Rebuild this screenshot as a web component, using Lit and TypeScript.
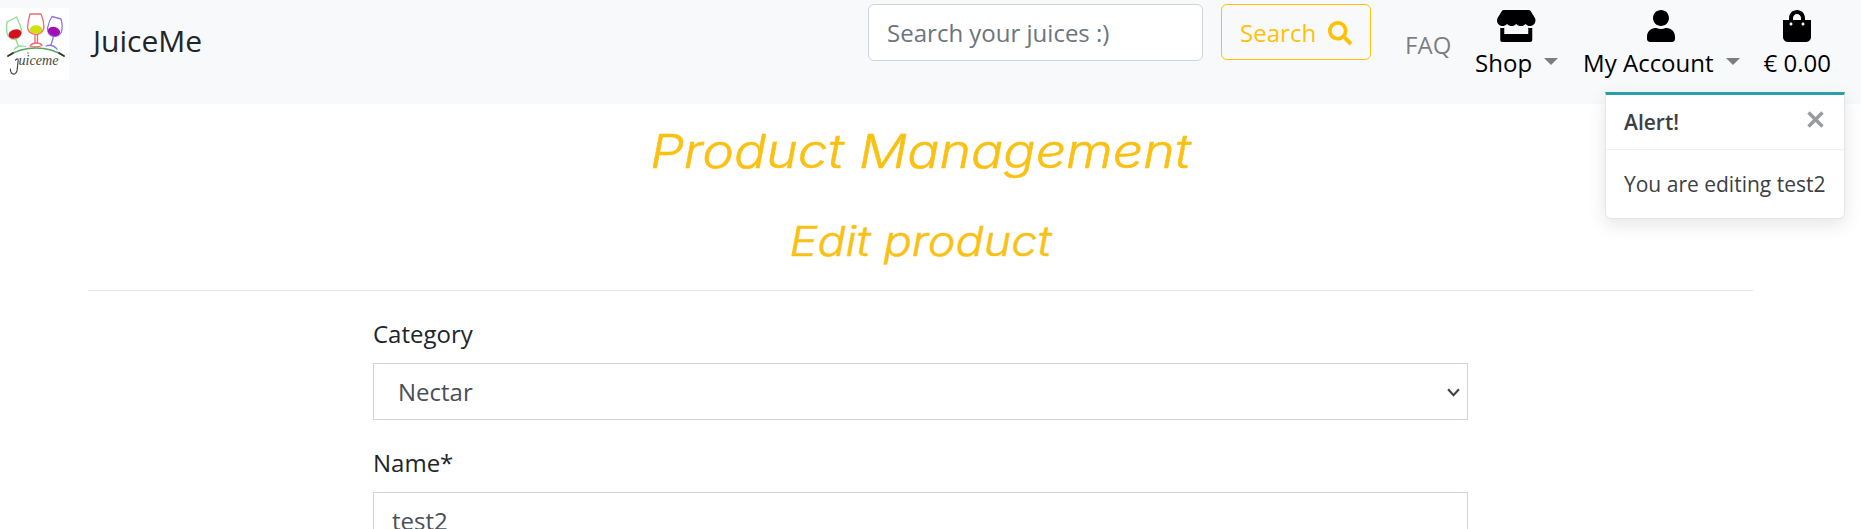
import { LitElement, html, css, svg } from "lit";
import { customElement, property } from "lit/decorators.js";

const ICONS: Record<string, { w: number; d: string }> = {
  search: { w: 512, d: "M505 442.7L405.3 343c-4.5-4.5-10.6-7-17-7H372c27.6-35.3 44-79.7 44-128C416 93.1 322.9 0 208 0S0 93.1 0 208s93.1 208 208 208c48.3 0 92.7-16.4 128-44v16.3c0 6.4 2.5 12.5 7 17l99.7 99.7c9.4 9.4 24.6 9.4 33.9 0l28.3-28.3c9.4-9.4 9.4-24.6.1-34zM208 336c-70.7 0-128-57.2-128-128 0-70.7 57.2-128 128-128 70.7 0 128 57.2 128 128 0 70.7-57.2 128-128 128z" },
  store: { w: 616, d: "M602 118.6L537.1 15C531.3 5.7 521 0 510 0H106C95 0 84.7 5.7 78.9 15L14 118.6c-33.5 53.5-3.8 127.9 58.8 136.4 4.5.6 9.1.9 13.7.9 29.6 0 55.8-13 73.8-33.1 18 20.1 44.3 33.1 73.8 33.1 29.6 0 55.8-13 73.8-33.1 18 20.1 44.3 33.1 73.8 33.1 29.6 0 55.8-13 73.8-33.1 18.1 20.1 44.3 33.1 73.8 33.1 4.7 0 9.2-.3 13.7-.9 62.8-8.4 92.6-82.8 59-136.4zM529.5 288c-10 0-19.9-1.5-29.5-3.8V384H116v-99.8c-9.6 2.2-19.5 3.8-29.5 3.8-6 0-12.1-.4-18-1.2-5.6-.8-11.1-2.1-16.4-3.6V480c0 17.7 14.3 32 32 32h448c17.7 0 32-14.3 32-32V283.2c-5.4 1.6-10.8 2.9-16.4 3.6-6.1.8-12.1 1.2-18.2 1.2z" },
  user: { w: 448, d: "M224 256c70.7 0 128-57.3 128-128S294.7 0 224 0 96 57.3 96 128s57.3 128 128 128zm89.6 32h-16.7c-22.2 10.2-46.9 16-72.9 16s-50.6-5.8-72.9-16h-16.7C60.2 288 0 348.2 0 422.4V464c0 26.5 21.5 48 48 48h352c26.5 0 48-21.5 48-48v-41.6c0-74.2-60.2-134.4-134.4-134.4z" },
  bag: { w: 448, d: "M352 160v-32C352 57.42 294.579 0 224 0 153.42 0 96 57.42 96 128v32H0v272c0 44.183 35.817 80 80 80h288c44.183 0 80-35.817 80-80V160h-96zm-192-32c0-35.29 28.71-64 64-64s64 28.71 64 64v32H160v-32zm160 120c-13.255 0-24-10.745-24-24s10.745-24 24-24 24 10.745 24 24-10.745 24-24 24zm-192 0c-13.255 0-24-10.745-24-24s10.745-24 24-24 24 10.745 24 24-10.745 24-24 24z" },
};

@customElement("fa-icon")
class FaIcon extends LitElement {
  @property() name = "search";
  static styles = css`
    :host { display: inline-flex; height: 32px; }
    .glyph { display: block; height: 100%; fill: currentColor; }
  `;
  render() {
    const i = ICONS[this.name];
    return html`<svg class="glyph" viewBox="0 0 ${i.w} 512">${svg`<path d=${i.d}></path>`}</svg>`;
  }
}

@customElement("juice-logo")
class JuiceLogo extends LitElement {
  static styles = css`
    :host { display: block; width: 69px; height: 72px; background: #fff; }
    .art { display: block; width: 69px; height: 72px; fill: none; stroke-linecap: round; stroke-linejoin: round; }
    .word { font: italic 15px "Liberation Serif", serif; fill: #3d4a3d; }
  `;
  render() {
    return html`<svg class="art" viewBox="0 8 69 72">
      <g stroke-width="1.3">
        <path stroke="#8fdc8f" d="M7 22 L16.500 17 Q20 24 21.500 30 Q21 38 15 39.500 Q8 39 7 33 Q6 27 7 22 M16 39.500 L18.500 46.500 M14.500 49 Q19 44.500 25.500 46.500"></path>
        <path stroke="#ef6a72" d="M30 14 H41 Q44 21 44 28 Q42 34 36 34.500 Q29 34 27.500 28 Q28 20 30 14 M35 34.500 V43 M37.500 34.500 V43 M30 46 Q32 43 36 43 Q41 43 42 45.500 Q37 48 30 46"></path>
        <path stroke="#8d76e8" d="M52 16.500 L61 19 Q63 26 61.500 32 Q59 37 53 36.500 Q47 34 47.500 28 Q49 21 52 16.500 M53.500 36.500 L51 45 M46 46 Q52 43.500 57 49"></path>
      </g>
      <ellipse cx="15" cy="34" rx="6.600" ry="4.600" fill="#d5101e" transform="rotate(-18 15 34)"></ellipse>
      <ellipse cx="36" cy="29.500" rx="6.200" ry="4.300" fill="#d2df08"></ellipse>
      <ellipse cx="54" cy="31.500" rx="6.200" ry="4.600" fill="#a40fb4" transform="rotate(14 54 31.500)"></ellipse>
      <path stroke="#5aa45a" stroke-width="1.500" d="M8 56 Q20 48 36 48 Q52 48 64 56"></path>
      <path stroke="#2a392d" stroke-width="1.700" d="M8 56 L13 53 M59 53 L64 56"></path>
      <path stroke="#424a45" stroke-width="1.200" d="M15.500 60 Q19 57 18 62 L17 71 Q15 76 11.500 73 Q10 71 10.500 69"></path>
      <text class="word" x="18.500" y="64.500" textLength="40" lengthAdjust="spacingAndGlyphs">uiceme</text>
      <circle cx="28" cy="53" r=".8" fill="#4ca04c"></circle>
    </svg>`;
  }
}

@customElement("app-root")
class AppRoot extends LitElement {
  static styles = css`
    :host { display: block; height: 529px; overflow: hidden; background: #fff; color: #212529;
      font: 24px/36px "Open Sans", "Noto Sans", sans-serif; }
    * { box-sizing: border-box; }
    .nav { height: 104px; background: #f8f9fa; display: flex; align-items: flex-start; padding-right: 30px; }
    .brand { display: flex; align-items: flex-start; gap: 24px; padding-top: 8px; margin-right: auto; }
    .title { font-size: 30px; line-height: 45px; padding-top: 10px; }
    .search { display: flex; gap: 18px; padding-top: 4px; margin-right: 34px; }
    .field { font: inherit; color: #495057; background: #fff; border: 1px solid #ced4da; padding: 9px 18px; height: 57px; margin: 0; outline: 0; display: block; width: 100%; }
    .query { width: 335px; border-radius: 6px; }
    .field::placeholder { color: #6c757d; opacity: 1; }
    .go { font: inherit; color: #ffc107; background: none; border: 1px solid #ffc107; border-radius: 6px; width: 150px; height: 56px; padding: 1px 18px 0 18px; display: flex; align-items: center; justify-content: space-between; }
    .go fa-icon { height: 24px; }
    .links { display: flex; padding-top: 10px; }
    .faq { color: rgba(0,0,0,.5); padding-top: 17px; width: 70px; }
    .item { display: flex; flex-direction: column; align-items: center; color: #000; }
    .row { display: flex; align-items: center; margin-top: 3px; white-space: nowrap; }
    .caret { border: 7px solid transparent; border-top-color: #7c7d7d; border-bottom: 0; margin: -3px 0 0 12px; }
    .shop { margin-right: 25px; }
    .account { margin-right: 24px; }
    .toast { position: absolute; left: 1605px; top: 92px; width: 240px; height: 127px; background: rgba(255,255,255,.95); border: 1px solid rgba(0,0,0,.1); border-top: 3px solid #2a9fa9; border-radius: 0 0 6px 6px; box-shadow: 0 6px 18px rgba(0,0,0,.1); font-size: 21px; line-height: 32px; color: #3c4044; }
    .head { display: flex; justify-content: space-between; align-items: center; height: 55px; padding: 0 20px 0 18px; border-bottom: 1px solid rgba(0,0,0,.05); }
    .head b { font-weight: 600; }
    .close { width: 17px; height: 17px; stroke: #999b9d; stroke-width: 3.4; margin-top: -5px; }
    .body { padding: 18px 0 0 18px; white-space: nowrap; }
    .main { width: 1841px; padding: 0 88px; }
    .h { margin: 0; text-align: center; color: #fac012; font-family: Inter, sans-serif; font-style: italic; font-weight: 300; -webkit-text-stroke: .5px #fac012; font-feature-settings: "cv11"; transform: scaleX(1.14); }
    .h1 { font-size: 47px; line-height: 58px; padding-top: 18px; }
    .h2 { font-size: 41px; line-height: 50px; padding-top: 36px; }
    .rule { border: 0; border-top: 1px solid rgba(0,0,0,.1); margin: 24px 0 25px; }
    .form { width: 1095px; margin: 0 auto; }
    .label { display: block; margin-bottom: 11px; }
    .group { margin-bottom: 25px; }
    .pick { display: grid; }
    .pick > * { grid-area: 1 / 1; }
    .select { appearance: none; padding-left: 24px; border-radius: 0; }
    .text { border-radius: 0; }
    .chev { align-self: center; justify-self: end; margin: 1px 8px 0 0; width: 13px; height: 9px; fill: none; stroke: #404347; stroke-width: 2; pointer-events: none; }
  `;
  render() {
    return html`
      <nav class="nav">
        <div class="brand"><juice-logo></juice-logo><span class="title">JuiceMe</span></div>
        <div class="search">
          <input class="field query" placeholder="Search your juices :)" />
          <button class="go"><span>Search</span><fa-icon name="search"></fa-icon></button>
        </div>
        <div class="links">
          <div class="faq">FAQ</div>
          <div class="item shop"><fa-icon name="store"></fa-icon><div class="row"><span>Shop</span><i class="caret"></i></div></div>
          <div class="item account"><fa-icon name="user"></fa-icon><div class="row"><span>My Account</span><i class="caret"></i></div></div>
          <div class="item"><fa-icon name="bag"></fa-icon><div class="row"><span>€ 0.00</span></div></div>
        </div>
      </nav>
      <main class="main">
        <h1 class="h h1">Product Management</h1>
        <h2 class="h h2">Edit product</h2>
        <hr class="rule" />
        <form class="form">
          <div class="group">
            <label class="label">Category</label>
            <div class="pick">
              <select class="field select"><option>Nectar</option></select>
              <svg class="chev" viewBox="0 0 12 8"><path d="M1 1l5 5.500 5-5.500"></path></svg>
            </div>
          </div>
          <div class="group">
            <label class="label">Name*</label>
            <input class="field text" .value=${"test2"} />
          </div>
        </form>
      </main>
      <div class="toast">
        <div class="head"><b>Alert!</b><svg class="close" viewBox="0 0 17 17"><path d="M1.500 1.500l14 14M15.500 1.500l-14 14"></path></svg></div>
        <div class="body">You are editing test2</div>
      </div>`;
  }
}
